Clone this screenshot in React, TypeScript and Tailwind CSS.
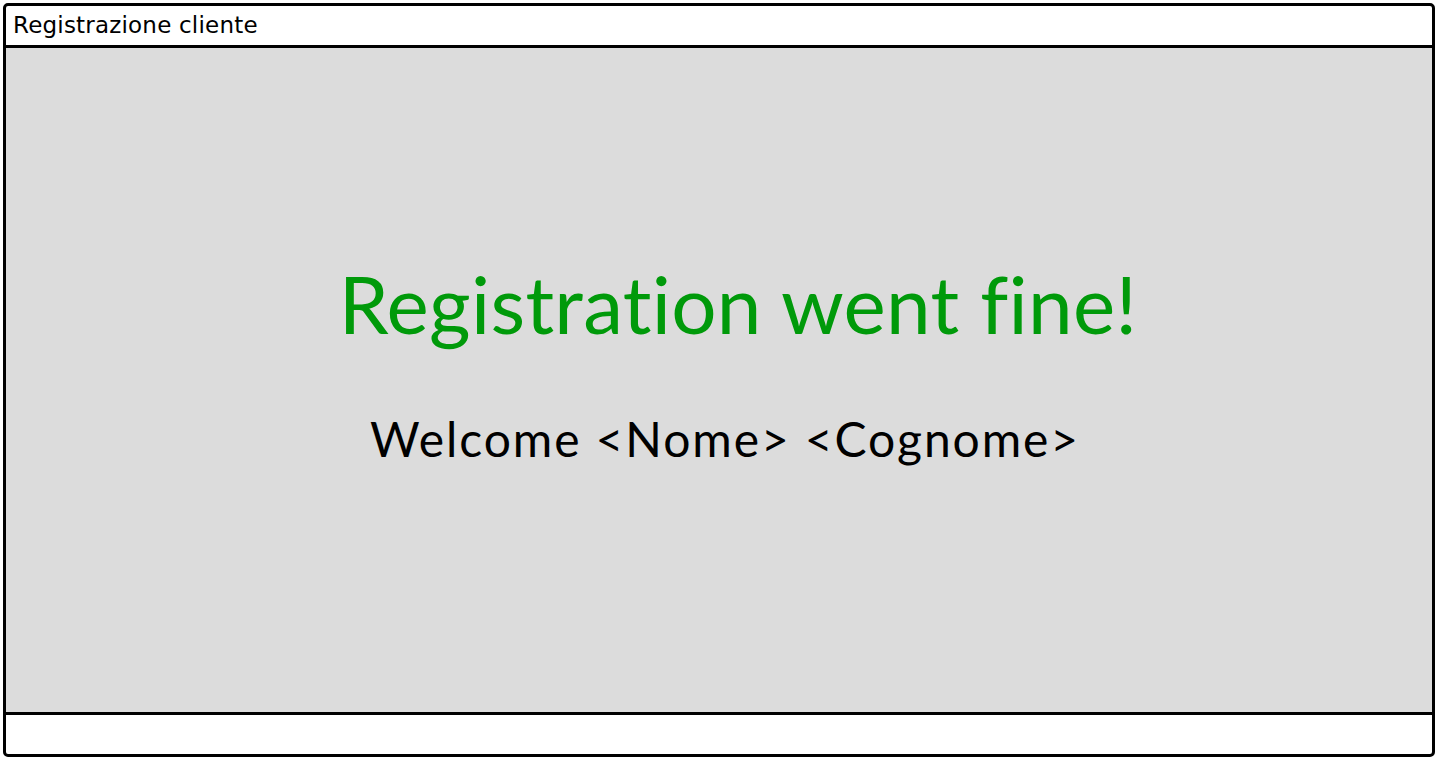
export default function App() {
  return (
    <div className="h-[760px] w-[1438px] bg-white p-[3px]" style={{ fontFamily: "Lato, 'Noto Sans', sans-serif" }}>
      <div className="flex h-full flex-col rounded-[5px] border-[3px] border-black">
        {/* title bar */}
        <div className="flex h-[39px] items-center px-[7px] pb-[1px] text-[23px] leading-none tracking-[0.2px] text-black [font-family:'DejaVu_Sans',sans-serif]">
          Registrazione cliente
        </div>
        <div className="h-[3px] bg-black" />
        {/* content */}
        <div className="flex flex-1 flex-col items-center bg-[#dcdcdc] pl-[38px] [font-variant-ligatures:none]">
          <div className="mt-[215px] text-[80px] leading-none tracking-[0.3px] text-[#009a0a]">Registration went fine!</div>
          <div className="mt-[72px] pr-[26px] text-[48px] leading-none tracking-[1.9px] text-black">Welcome &lt;Nome&gt; &lt;Cognome&gt;</div>
        </div>
        <div className="h-[3px] bg-black" />
        {/* footer */}
        <div className="h-[39px]" />
      </div>
    </div>
  );
}
